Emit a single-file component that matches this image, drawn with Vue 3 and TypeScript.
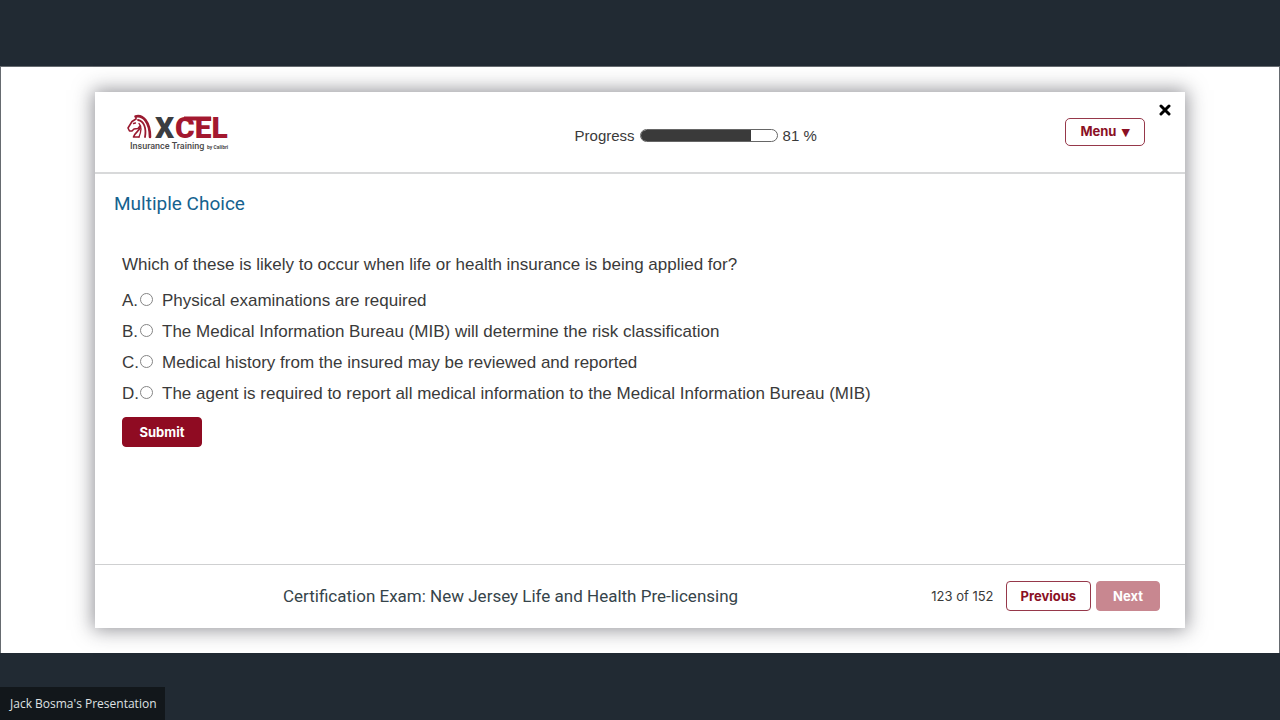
<script setup lang="ts">
import { ref } from 'vue'

interface Choice {
  letter: string
  text: string
}

const progress = 81
const selected = ref<string>('')
const choices: Choice[] = [
  { letter: 'A', text: 'Physical examinations are required' },
  { letter: 'B', text: 'The Medical Information Bureau (MIB) will determine the risk classification' },
  { letter: 'C', text: 'Medical history from the insured may be reviewed and reported' },
  { letter: 'D', text: 'The agent is required to report all medical information to the Medical Information Bureau (MIB)' },
]
</script>

<template>
  <div class="screen">
    <main class="stage">
      <section class="card">
        <header class="head">
          <div class="logo">
            <svg class="logo-art" viewBox="0 -4 106 48" role="img" aria-label="XCEL Insurance Training by Calibri">
              <g fill="none" stroke="#9a1a30" stroke-linecap="round" stroke-linejoin="round">
                <path d="M8.500 4.500C16 2.500 23 10 23 25" stroke-width="2.600" />
                <path d="M11 8C17 9 19.500 16 18 25" stroke-width="1.800" />
                <path d="M9 4.500 9 7 5 9.500 1 16 2.500 19 5 19 7 17 11 16.500 13 14" stroke-width="1.600" />
                <path d="M13.500 14C14 18 8 20 6.500 25H12" stroke-width="1.600" />
                <path d="M12 11.500C15.500 15 14 20 12 25" stroke-width="1.300" />
                <path d="M6.500 11.500 8.500 11" stroke-width="1.300" />
              </g>
              <text class="word dark" x="28" y="26">X</text>
              <text class="word red" x="48" y="26">CEL</text>
              <path d="M57 4.500H84V8.500H57Z" fill="#a3182f" />
              <text class="sub" x="3" y="37">Insurance Training</text>
              <text class="by" x="80" y="37">by Calibri</text>
            </svg>
          </div>
          <div class="progress">
            <span>Progress</span>
            <div class="track" role="progressbar" aria-label="Progress" :aria-valuenow="progress" aria-valuemin="0" aria-valuemax="100">
              <div class="fill" :style="{ width: progress + '%' }"></div>
            </div>
            <span>{{ progress }} %</span>
          </div>
          <button class="btn outline menu" type="button">Menu <span class="caret">▼</span></button>
          <button class="close" type="button" aria-label="Close">
            <svg viewBox="0 0 12 12" width="12" height="12"><path d="M2 2 10 10M10 2 2 10" stroke="#000" stroke-width="3" stroke-linecap="round" /></svg>
          </button>
        </header>

        <div class="body">
          <h1>Multiple Choice</h1>
          <form class="quiz" @submit.prevent>
            <fieldset>
              <legend>Which of these is likely to occur when life or health insurance is being applied for?</legend>
              <label v-for="c in choices" :key="c.letter" class="choice">
                <span class="letter">{{ c.letter }}.</span>
                <input v-model="selected" type="radio" name="answer" :value="c.letter" />
                <span>{{ c.text }}</span>
              </label>
            </fieldset>
            <button class="btn submit" type="submit">Submit</button>
          </form>
        </div>

        <footer class="foot">
          <p class="course">Certification Exam: New Jersey Life and Health Pre-licensing</p>
          <nav class="pager">
            <span class="count">123 of 152</span>
            <button class="btn outline" type="button">Previous</button>
            <button class="btn next" type="button" disabled>Next</button>
          </nav>
        </footer>
      </section>
    </main>
    <div class="presenter">Jack Bosma's Presentation</div>
  </div>
</template>

<style>
body {
  margin: 0;
  background: #212a33;
}
</style>

<style scoped>
.screen {
  box-sizing: border-box;
  min-height: 100vh;
  padding: 66px 0 67px;
  display: flex;
  background: #212a33;
  color: #3a3a3a;
  font-family: "Liberation Sans", Arial, sans-serif;
  font-size: 17px;
  line-height: 24px;
}
.stage {
  flex: 1;
  display: flex;
  padding: 25px 94px;
  background: #fff;
  border: 1px solid #666b70;
  border-width: 1px 1px 0;
}
.card {
  flex: 1;
  display: flex;
  flex-direction: column;
  background: #fff;
  box-shadow: 0 0 18px 2px rgba(40, 40, 50, 0.5);
}
.head {
  position: relative;
  box-sizing: border-box;
  height: 82px;
  display: grid;
  grid-template-columns: 15fr auto 11fr;
  align-items: center;
  padding: 0 40px 0 32px;
  border-bottom: 2px solid #d8d9da;
}
.logo {
  display: flex;
}
.logo-art {
  width: 106px;
  height: 48px;
}
.word {
  font-family: Roboto, sans-serif;
  font-weight: 900;
  font-size: 30px;
}
.dark {
  fill: #3b3d40;
}
.red {
  fill: #a3182f;
}
.sub {
  font-family: Roboto, sans-serif;
  font-weight: 500;
  font-size: 9px;
  fill: #4a4a4a;
}
.by {
  font-family: Roboto, sans-serif;
  font-weight: 700;
  font-size: 5px;
  fill: #4a4a4a;
}
.progress {
  display: flex;
  align-items: center;
  gap: 5px;
  padding-top: 7px;
  font-size: 15px;
}
.track {
  box-sizing: border-box;
  width: 138px;
  height: 13px;
  border: 1px solid #666;
  border-radius: 7px;
  overflow: hidden;
}
.fill {
  height: 100%;
  background: #3a3a3a;
}
.btn {
  box-sizing: border-box;
  height: 30px;
  padding: 0 14px;
  border: 1px solid #8f0b22;
  border-radius: 4px;
  font: bold 13px/20px Inter, "Liberation Sans", sans-serif;
}
.outline {
  background: #fff;
  color: #8a1024;
  border-color: #96384a;
}
.menu {
  justify-self: end;
  height: 28px;
  border-radius: 5px;
}
.caret {
  margin-left: 2px;
  font-family: "DejaVu Sans", sans-serif;
  font-size: 11px;
}
.close {
  position: absolute;
  top: 12px;
  right: 14px;
  display: flex;
  padding: 0;
  border: 0;
  background: none;
}
.body {
  flex: 1;
  padding: 18px 19px;
}
h1 {
  margin: 0;
  color: #15628f;
  font-family: Roboto, "Liberation Sans", sans-serif;
  font-size: 19px;
  line-height: 24px;
  font-weight: 400;
}
.quiz {
  padding: 37px 8px 0;
}
fieldset {
  margin: 0;
  padding: 0;
  border: 0;
}
legend {
  padding: 0;
  margin-bottom: 8px;
}
.choice {
  display: flex;
  align-items: center;
  height: 31px;
}
.letter {
  width: 18px;
}
.choice input {
  appearance: none;
  box-sizing: border-box;
  width: 13px;
  height: 13px;
  margin: 0 9px 2px 0;
  border: 1px solid #858585;
  border-radius: 50%;
  background: #fff;
}
.choice input:checked {
  border: 4px solid #8f0b22;
}
.submit {
  width: 80px;
  margin-top: 8px;
  background: #8f0b22;
  color: #fff;
}
.foot {
  box-sizing: border-box;
  height: 64px;
  display: flex;
  align-items: center;
  justify-content: space-between;
  padding: 0 25px 2px 188px;
  border-top: 1px solid #cfd0d1;
}
.course {
  margin: 0;
  color: #36444a;
  font-family: Roboto, "Liberation Sans", sans-serif;
}
.pager {
  display: flex;
  align-items: center;
  gap: 5px;
}
.count {
  margin-right: 7px;
  font-family: Inter, sans-serif;
  font-size: 13px;
}
.next {
  padding: 0 16px;
  background: #c88790;
  border-color: #c88790;
  color: #fff;
}
.presenter {
  position: fixed;
  left: 0;
  bottom: 0;
  box-sizing: border-box;
  height: 33px;
  padding: 0 8px 0 10px;
  background: #12171b;
  color: #dfe1e3;
  font-family: "Open Sans", "Noto Sans", sans-serif;
  font-size: 12px;
  line-height: 33px;
}
</style>
